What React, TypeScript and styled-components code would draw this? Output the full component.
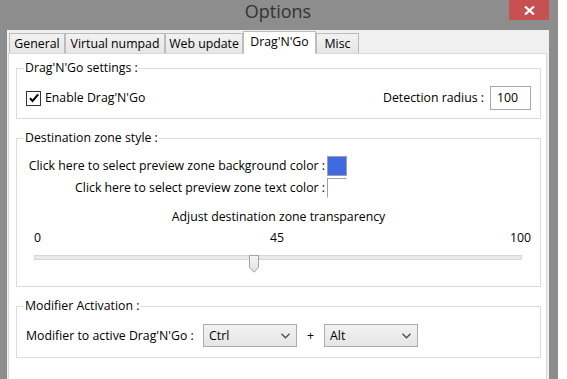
import React from "react";
import styled, { createGlobalStyle } from "styled-components";

const GlobalStyle = createGlobalStyle`
  html, body {
    margin: 0;
    padding: 0;
    background: #ffffff;
  }
  body {
    font-family: "Open Sans", "Noto Sans", sans-serif;
    font-size: 12.3px;
    line-height: 16px;
    color: #000000;
  }
  * {
    box-sizing: border-box;
  }
`;

const tabs = [
  { name: "General", width: 56 },
  { name: "Virtual numpad", width: 100 },
  { name: "Web update", width: 78 },
  { name: "Drag'N'Go", width: 73, active: true },
  { name: "Misc", width: 43 },
];

const transparency = 45;

const App: React.FC = () => {
  return (
    <Screen>
      <GlobalStyle />
      <Window>
        <TitleBar>
          <Title>Options</Title>
          <CloseButton>
            <svg width="11" height="9" viewBox="0 0 11 9">
              <path d="M1 0.5 L10 8.5 M10 0.5 L1 8.5" stroke="#fff" strokeWidth="2.2" />
            </svg>
          </CloseButton>
        </TitleBar>

        <Client>
          <TabStrip>
            {tabs.map(t => (
              <Tab key={t.name} $w={t.width} $active={t.active}>
                {t.name}
              </Tab>
            ))}
          </TabStrip>

          <Panel>
            {/* réglages généraux */}
            <Group>
              <Legend>Drag'N'Go settings :</Legend>
              <Row>
                <CheckLabel>
                  <CheckBox>
                    <svg width="12" height="12" viewBox="0 0 12 12">
                      <path d="M2 6.2 L4.6 9 L10.2 2.4" fill="none" stroke="#000" strokeWidth="2" />
                    </svg>
                  </CheckBox>
                  Enable Drag'N'Go
                </CheckLabel>
                <FieldLabel>
                  Detection radius :
                  <NumberBox>100</NumberBox>
                </FieldLabel>
              </Row>
            </Group>

            {/* couleurs de la zone */}
            <Group>
              <Legend>Destination zone style :</Legend>
              <ColorGrid>
                <ColorText>Click here to select preview zone background color :</ColorText>
                <Swatch $color="#4169e1" />
                <ColorText>Click here to select preview zone text color :</ColorText>
                <Swatch $empty />
              </ColorGrid>
              <Caption>Adjust destination zone transparency</Caption>
              <ScaleLabels>
                <span>0</span>
                <span>{transparency}</span>
                <ScaleEnd>100</ScaleEnd>
              </ScaleLabels>
              <Slider>
                <Track />
                <Thumb style={{ left: `${(transparency / 100) * 478}px` }}>
                  <svg width="10" height="18" viewBox="0 0 10 18">
                    <defs>
                      <linearGradient id="thumbFill" x1="0" y1="0" x2="0" y2="1">
                        <stop offset="0" stopColor="#f4f4f4" />
                        <stop offset="1" stopColor="#e2e2e2" />
                      </linearGradient>
                    </defs>
                    <path
                      d="M0.5 0.5 H9.5 V12.5 L5 17.2 L0.5 12.5 Z"
                      fill="url(#thumbFill)"
                      stroke="#a3a3a3"
                    />
                  </svg>
                </Thumb>
              </Slider>
            </Group>

            {/* touches de modification */}
            <Group>
              <Legend>Modifier Activation :</Legend>
              <ModifierRow>
                <ModifierText>Modifier to active Drag'N'Go :</ModifierText>
                <Combo>
                  Ctrl
                  <Chevron />
                </Combo>
                <span>+</span>
                <Combo>
                  Alt
                  <Chevron />
                </Combo>
              </ModifierRow>
            </Group>
          </Panel>
        </Client>
      </Window>
    </Screen>
  );
};

const Chevron: React.FC = () => (
  <svg width="9" height="6" viewBox="0 0 9 6">
    <path d="M0.5 0.8 L4.5 4.8 L8.5 0.8" fill="none" stroke="#4a4a4a" strokeWidth="1.3" />
  </svg>
);

const Screen = styled.div`
  display: flex;
  width: 567px;
  height: 379px;
  overflow: hidden;
  background: #ffffff;
`;

const Window = styled.div`
  width: 558px;
  height: 100%;
  flex-shrink: 0;
  display: flex;
  flex-direction: column;
  padding: 0 9px 0 7px;
  background: #8d8d8d;
`;

const TitleBar = styled.div`
  height: 30px;
  flex-shrink: 0;
  display: grid;
  grid-template-columns: 1fr auto 1fr;
`;

const Title = styled.div`
  grid-column: 2;
  font-size: 18px;
  line-height: 22px;
  color: #333333;
`;

const CloseButton = styled.div`
  justify-self: end;
  width: 40px;
  height: 20px;
  background: #c75050;
  display: flex;
  align-items: center;
  justify-content: center;
`;

const Client = styled.div`
  flex: 1;
  display: flex;
  flex-direction: column;
  padding: 0 2px 0 1px;
  background: #f0f0f0;
`;

const TabStrip = styled.div`
  height: 23px;
  flex-shrink: 0;
  display: flex;
  align-items: flex-end;
  padding-left: 1px;
`;

const Tab = styled.div<{ $w: number; $active?: boolean }>`
  width: ${({ $w }) => $w}px;
  height: ${({ $active }) => ($active ? 23 : 20)}px;
  margin-bottom: ${({ $active }) => ($active ? -1 : 0)}px;
  position: relative;
  z-index: ${({ $active }) => ($active ? 1 : 0)};
  display: flex;
  align-items: center;
  justify-content: center;
  padding-bottom: ${({ $active }) => ($active ? 2 : 0)}px;
  border: 1px solid #bcbcbc;
  border-bottom: none;
  background: ${({ $active }) =>
    $active ? "#ffffff" : "linear-gradient(#f2f2f2, #e6e6e6)"};
  white-space: nowrap;
`;

const Panel = styled.div`
  flex: 1;
  display: flex;
  flex-direction: column;
  padding: 6px 5px 0 7px;
  border: 1px solid #d9d9d9;
  border-bottom: none;
  background: #ffffff;
`;

const Group = styled.fieldset`
  margin: 0;
  padding: 10px 9px 8px 9px;
  border: 1px solid #dcdcdc;
  min-width: 0;
  & + & {
    margin-top: 11px;
  }
`;

const Legend = styled.legend`
  margin-left: -2px;
  padding: 0 1px;
  line-height: 16px;
`;

const Row = styled.div`
  height: 24px;
  display: flex;
  align-items: center;
  justify-content: space-between;
`;

const CheckLabel = styled.label`
  display: flex;
  align-items: center;
  gap: 4px;
`;

const CheckBox = styled.span`
  width: 15px;
  height: 15px;
  display: flex;
  align-items: center;
  justify-content: center;
  border: 1px solid #333333;
  background: #ffffff;
`;

const FieldLabel = styled.label`
  display: flex;
  align-items: center;
  gap: 6px;
`;

const NumberBox = styled.div`
  width: 41px;
  height: 24px;
  padding-left: 6px;
  display: flex;
  align-items: center;
  border: 1px solid #a8a8a8;
  background: #ffffff;
`;

const ColorGrid = styled.div`
  display: grid;
  grid-template-columns: 298px 20px;
  grid-auto-rows: 20px;
  column-gap: 2px;
  row-gap: 2px;
  align-items: center;
  margin-left: 1px;
`;

const ColorText = styled.span`
  text-align: right;
  white-space: nowrap;
`;

const Swatch = styled.span<{ $color?: string; $empty?: boolean }>`
  width: 20px;
  height: 20px;
  background: ${({ $color }) => $color || "#ffffff"};
  border: 1px solid #a0a0a0;
  border-right-color: ${({ $empty }) => ($empty ? "#ffffff" : "#a0a0a0")};
  border-bottom-color: ${({ $empty }) => ($empty ? "#ffffff" : "#a0a0a0")};
`;

const Caption = styled.div`
  margin-top: 11px;
  text-align: center;
`;

const ScaleLabels = styled.div`
  margin: 5px 0 0 8px;
  display: grid;
  grid-template-columns: 236px auto 1fr;
`;

const ScaleEnd = styled.span`
  justify-self: end;
`;

const Slider = styled.div`
  position: relative;
  width: 488px;
  height: 18px;
  margin: 9px 0 5px 8px;
`;

const Track = styled.div`
  margin-top: 7px;
  height: 5px;
  border: 1px solid #d6d6d6;
  background: #e7eaea;
`;

const Thumb = styled.div`
  position: absolute;
  top: 0;
  width: 10px;
  height: 18px;
  display: flex;
`;

const ModifierRow = styled.div`
  display: flex;
  align-items: center;
  gap: 10px;
  margin-bottom: 2px;
`;

const ModifierText = styled.span`
  width: 167px;
  white-space: nowrap;
`;

const Combo = styled.div`
  width: 94px;
  height: 23px;
  padding: 0 6px 0 5px;
  display: flex;
  align-items: center;
  justify-content: space-between;
  border: 1px solid #acacac;
  background: linear-gradient(#f2f2f2, #e5e5e5);
`;

export default App;
